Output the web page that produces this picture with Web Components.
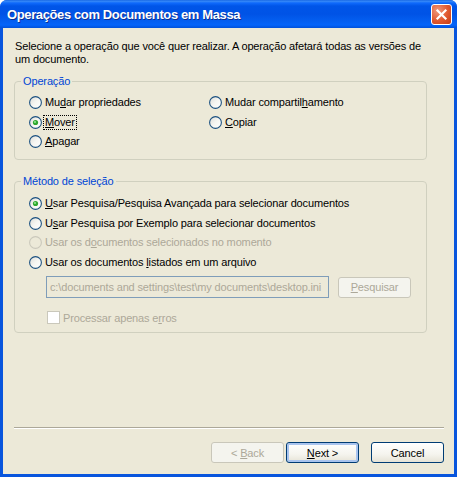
<!DOCTYPE html>
<html>
<head>
<meta charset="utf-8">
<title>Operações com Documentos em Massa</title>
<style>
html, body { margin:0; padding:0; background:#fff; }
body { font:11px "Liberation Sans", sans-serif; letter-spacing:-0.14px; color:#000; }
</style>
</head>
<body>
<xp-window heading="Operações com Documentos em Massa">
	<p class="intro" slot="intro">Selecione a operação que você quer realizar. A operação afetará todas as versões de um documento.</p>

	<xp-group label="Operação" slot="groups" h="85" cols>
		<xp-radio>Mu<u>d</u>ar propriedades</xp-radio>
		<xp-radio>Mudar compartil<u>h</u>amento</xp-radio>
		<xp-radio checked focused><u>M</u>over</xp-radio>
		<xp-radio><u>C</u>opiar</xp-radio>
		<xp-radio><u>A</u>pagar</xp-radio>
	</xp-group>

	<xp-group label="Método de seleção" slot="groups" h="158" class="second">
		<xp-radio checked><u>U</u>sar Pesquisa/Pesquisa Avançada para selecionar documentos</xp-radio>
		<xp-radio>U<u>s</u>ar Pesquisa por Exemplo para selecionar documentos</xp-radio>
		<xp-radio disabled>Usar os d<u>o</u>cumentos selecionados no momento</xp-radio>
		<xp-radio>Usar os documentos <u>l</u>istados em um arquivo</xp-radio>
		<xp-file-row value="c:\documents and settings\test\my documents\desktop.ini"><u>P</u>esquisar</xp-file-row>
		<xp-check disabled>Processar apenas e<u>r</u>ros</xp-check>
	</xp-group>

	<xp-button slot="buttons" disabled>&lt; <u>B</u>ack</xp-button>
	<xp-button slot="buttons" primary><u>N</u>ext &gt;</xp-button>
	<xp-button slot="buttons" class="cancel">Cancel</xp-button>
</xp-window>

<script>
/* window frame + title bar */
class XpWindow extends HTMLElement {
	constructor() {
		super();
		let root = this.attachShadow({mode:'open'});
		root.innerHTML = `
		<style>
			:host {
				display:flex;
				flex-direction:column;
				width:457px;
				height:477px;
				box-sizing:border-box;
				overflow:hidden;
				background:#0855dd;
				border-radius:7px 7px 0 0;
			}
			.bar {
				flex:0 0 28px;
				box-sizing:border-box;
				display:flex;
				align-items:center;
				justify-content:space-between;
				padding:0 5px 0 7px;
				background:linear-gradient(180deg,#0a5be0 0,#3b8cf6 1px,#0f6afc 3px,#0055e8 6px,#0053e6 14px,#0460f2 22px,#0464fa 25px,#0051da 28px);
				color:#fff;
				font:bold 13px "Liberation Sans", sans-serif;
				letter-spacing:-.38px;
				text-shadow:1px 1px 0 #0f2f8f;
			}
			.close {
				width:21px;
				height:21px;
				margin-top:1px;
				box-sizing:border-box;
				border:1px solid #fff;
				border-radius:3px;
				background:radial-gradient(circle at 30% 30%,#f0987c,#e0582f 55%,#c33c16);
				display:flex;
			}
			.close svg { margin:auto; display:block; }
			.client {
				flex:1 1 auto;
				margin:0 3px 3px;
				background:#ece9d8;
				display:flex;
				flex-direction:column;
				padding:12px 10px 0 11px;
				min-height:0;
			}
			::slotted(.intro) {
				margin:0 0 9px 1px;
				width:420px;
				line-height:13px;
			}
			.groups { display:flex; flex-direction:column; gap:15px; }
			.sep {
				margin-top:auto;
				height:1px;
				background:#aca899;
				border-bottom:1px solid #fff;
			}
			.buttons {
				display:flex;
				padding:13px 0 11px;
				justify-content:flex-end;
			}
		</style>
		<div class="bar">
			<span>${this.getAttribute('heading')}</span>
			<div class="close"><svg width="13" height="13" viewBox="0 0 13 13"><path d="M2.5 2.5l8 8M10.5 2.5l-8 8" stroke="#fff" stroke-width="2.2" stroke-linecap="square" fill="none"/></svg></div>
		</div>
		<div class="client">
			<slot name="intro"></slot>
			<div class="groups"><slot name="groups"></slot></div>
			<div class="sep"></div>
			<div class="buttons"><slot name="buttons"></slot></div>
		</div>`;
	}
}
customElements.define('xp-window', XpWindow);

/* group box */
class XpGroup extends HTMLElement {
	constructor() {
		super();
		let root = this.attachShadow({mode:'open'});
		root.innerHTML = `
		<style>
			:host { display:block; width:413px; box-sizing:border-box; }
			fieldset {
				margin:0;
				padding:0;
				box-sizing:border-box;
				border:1px solid #d0d0bf;
				border-radius:4px;
				height:${this.getAttribute('h')}px;
				min-width:0;
			}
			legend { color:#0046d5; padding:0 2px; margin-left:6px; line-height:13px; }
			.body { display:flex; flex-direction:column; padding:5px 0 0 14px; }
			:host(.second) .body { padding-top:6px; }
			:host([cols]) .body {
				display:grid;
				grid-template-columns:180px 1fr;
			}
		</style>
		<fieldset>
			<legend>${this.getAttribute('label')}</legend>
			<div class="body"><slot></slot></div>
		</fieldset>`;
	}
}
customElements.define('xp-group', XpGroup);

/* radio button */
class XpRadio extends HTMLElement {
	constructor() {
		super();
		let root = this.attachShadow({mode:'open'});
		root.innerHTML = `
		<style>
			:host {
				display:flex;
				align-items:center;
				height:19.5px;
				gap:2px;
				cursor:default;
			}
			:host([disabled]) { color:#aca899; }
			svg { flex:none; display:block; }
			.label { padding:0 1px; line-height:13px; }
			:host([focused]) .label { outline:1px dotted #000; outline-offset:0; }
			u { text-decoration:underline; }
		</style>
		${this.svg()}
		<span class="label"><slot></slot></span>`;
	}
	svg() {
		let off = this.hasAttribute('disabled');
		let ring = off ? '#cac8bb' : '#1c5180';
		let fill = off ? '#ece9d8' : 'url(#g)';
		let dot = this.hasAttribute('checked')
			? '<circle cx="6.5" cy="6.5" r="2.6" fill="#2fa82f"/><circle cx="6" cy="6" r="1.1" fill="#8fe88f"/>' : '';
		return `<svg width="13" height="13" viewBox="0 0 13 13">
			<defs><linearGradient id="g" x1="0" y1="0" x2="1" y2="1">
				<stop offset="0" stop-color="#dcdcd6"/><stop offset=".5" stop-color="#f6f6f2"/><stop offset="1" stop-color="#fff"/>
			</linearGradient></defs>
			<circle cx="6.5" cy="6.5" r="5.9" fill="${fill}" stroke="${ring}" stroke-width="1.1"/>${dot}
		</svg>`;
	}
}
customElements.define('xp-radio', XpRadio);

/* checkbox */
class XpCheck extends HTMLElement {
	constructor() {
		super();
		let root = this.attachShadow({mode:'open'});
		root.innerHTML = `
		<style>
			:host { display:flex; align-items:center; gap:3px; margin:13px 0 0 18px; height:13px; }
			:host([disabled]) { color:#aca899; }
			.box { width:13px; height:13px; box-sizing:border-box; background:#fff; border:1px solid #cac8bb; flex:none; }
		</style>
		<span class="box"></span><span><slot></slot></span>`;
	}
}
customElements.define('xp-check', XpCheck);

/* push button */
class XpButton extends HTMLElement {
	constructor() {
		super();
		let root = this.attachShadow({mode:'open'});
		root.innerHTML = `
		<style>
			:host {
				display:flex;
				align-items:center;
				justify-content:center;
				width:73px;
				height:21px;
				box-sizing:border-box;
				border:1px solid #003c74;
				border-radius:3px;
				background:linear-gradient(180deg,#fff 0,#f5f4ee 60%,#e6e3d6 100%);
				cursor:default;
			}
			:host([disabled]) {
				border-color:#c9c7ba;
				background:#f4f4ee;
				color:#aca899;
			}
			:host([primary]) {
				box-shadow:inset 0 0 0 2px #a9c4ee;
				margin-left:2px;
			}
			:host(.cancel) { margin-left:12px; }
		</style>
		<span><slot></slot></span>`;
	}
}
customElements.define('xp-button', XpButton);

/* file path field with its search button */
class XpFileRow extends HTMLElement {
	constructor() {
		super();
		let root = this.attachShadow({mode:'open'});
		root.innerHTML = `
		<style>
			:host { display:flex; align-items:center; gap:9px; margin:4px 0 0 17px; height:22px; }
			.field {
				width:283px;
				height:22px;
				box-sizing:border-box;
				border:1px solid #7f9db9;
				background:#ece9d8;
				color:#aca899;
				padding:0 0 0 3px;
				line-height:20px;
				white-space:nowrap;
				overflow:hidden;
			}
		</style>
		<div class="field">${this.getAttribute('value')}</div>
		<xp-button disabled><slot></slot></xp-button>`;
	}
}
customElements.define('xp-file-row', XpFileRow);
</script>
</body>
</html>
